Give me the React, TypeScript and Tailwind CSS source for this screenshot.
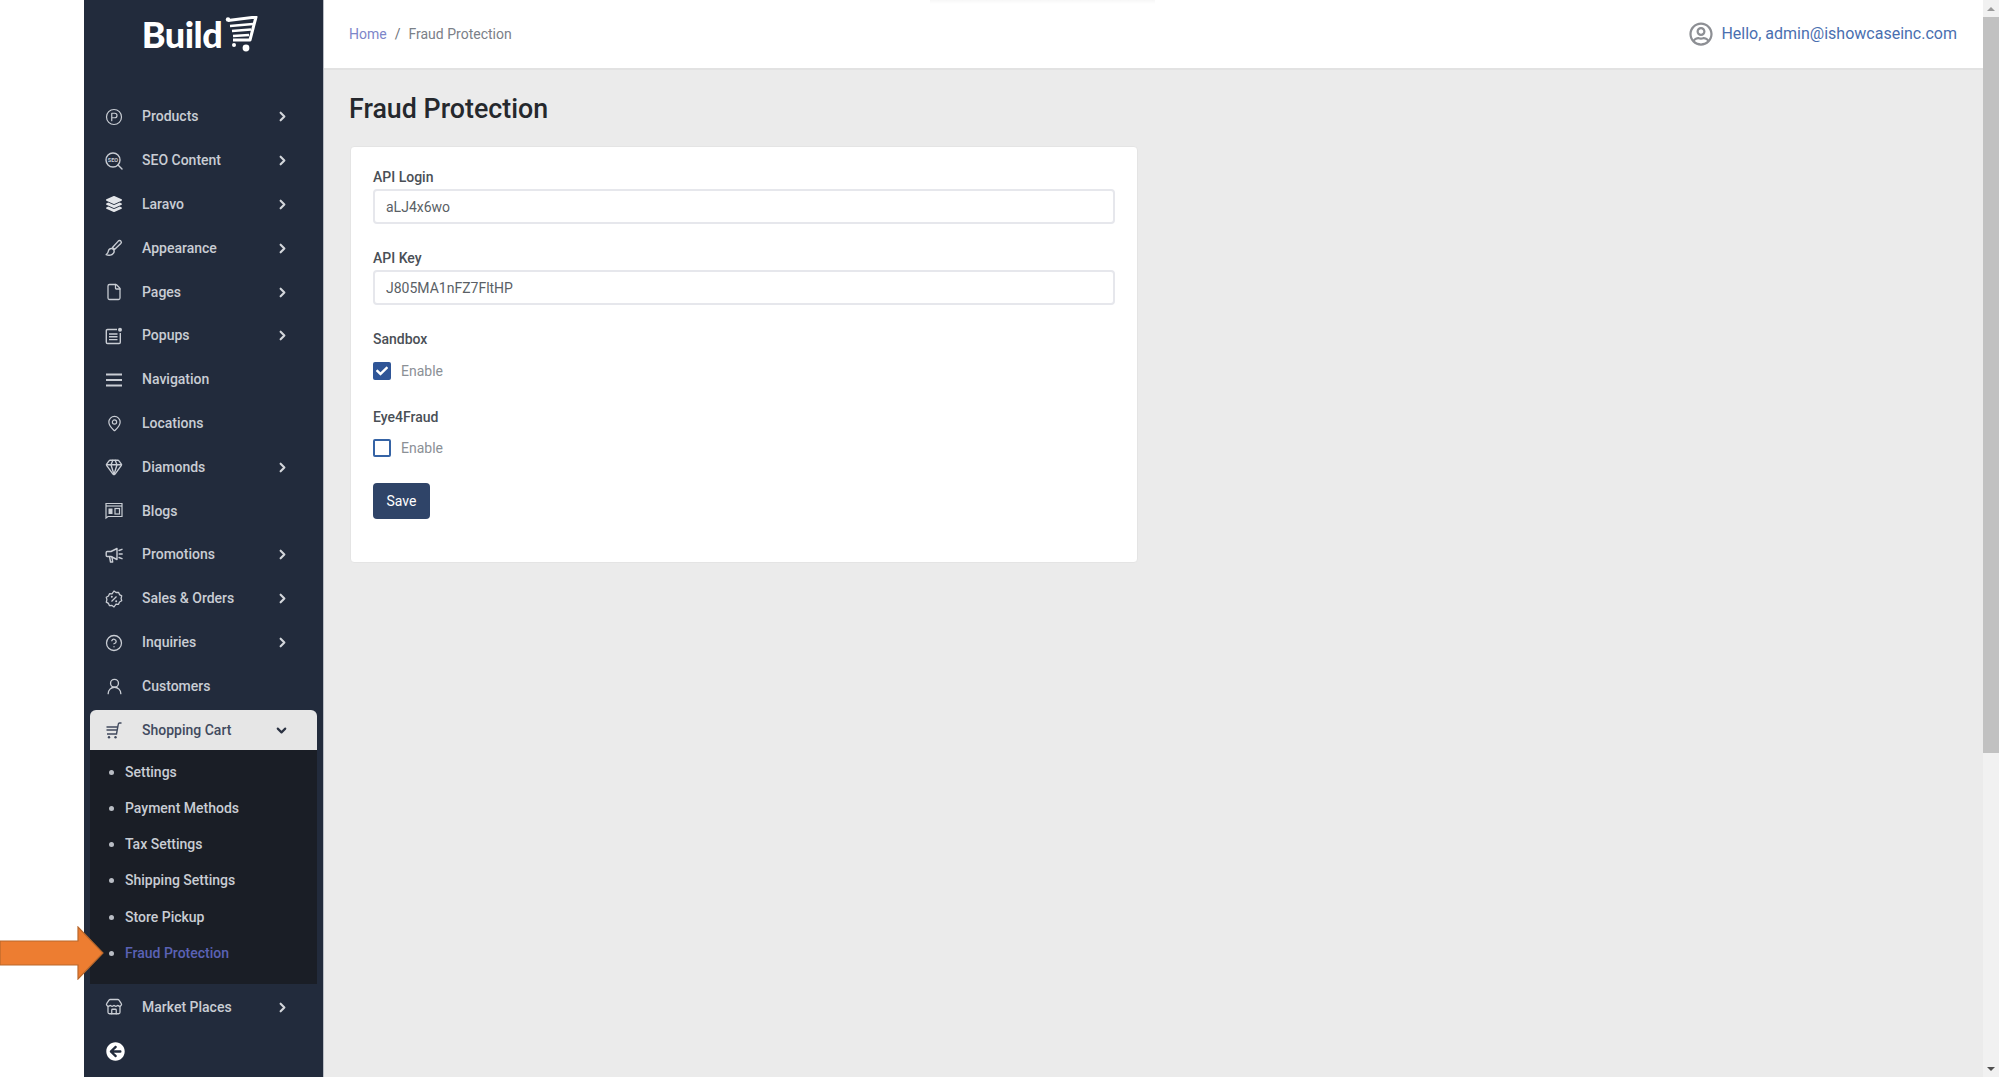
import React from 'react';
import {
  ChevronDown,
  ChevronRight,
  CircleHelp,
  CircleParking,
  File,
  Gem,
  MapPin,
  Store,
  UserRound,
} from 'lucide-react';
import { FaArrowCircleLeft, FaCheck, FaLayerGroup, FaRegUserCircle } from 'react-icons/fa';

const font = { fontFamily: 'Roboto, sans-serif' };

const SeoIcon = () => (
  <svg width="18" height="18" viewBox="0 0 18 18" fill="none" stroke="currentColor" strokeWidth="1.4">
    <circle cx="8" cy="8" r="7" />
    <path d="M13 13l4 4" strokeLinecap="round" />
    <text x="8" y="10" textAnchor="middle" fontSize="5.5" fontWeight="700" fill="currentColor" stroke="none">
      SEO
    </text>
  </svg>
);

const BrushIcon = () => (
  <svg width="18" height="18" viewBox="0 0 18 18" fill="none" stroke="currentColor" strokeWidth="1.4" strokeLinejoin="round">
    <path d="M7.5 8.5l5.8-6.4c.8-.8 2-.7 2.6 0 .6.7.6 1.7-.1 2.4l-6.3 5.9z" />
    <path d="M7 9.5c-2-.3-3.5 1-3.7 2.8-.1 1.2-.6 2.4-2.1 3.3 2.6 1.2 6 .7 7.3-1.4.8-1.3.7-3-.2-3.9z" />
  </svg>
);

const PopupIcon = () => (
  <svg width="18" height="18" viewBox="0 0 18 18" fill="none" stroke="currentColor" strokeWidth="1.4">
    <path d="M12 2.5H2.5a1.2 1.2 0 0 0-1.2 1.2v11.6c0 .7.5 1.2 1.2 1.2h11.6c.7 0 1.2-.5 1.2-1.2V6" />
    <path d="M4 7h8.5M4 9.8h8.5M4 12.6h8.5" />
    <circle cx="15" cy="2.8" r="2" fill="currentColor" stroke="none" />
  </svg>
);

const BlogIcon = () => (
  <svg width="18" height="18" viewBox="0 0 18 18" fill="none" stroke="currentColor" strokeWidth="1.2">
    <path d="M1 1.5h16v13H3l-2 1.5z" />
    <path d="M1 4h16" />
    <rect x="3.5" y="6.5" width="4" height="5.5" fill="currentColor" stroke="none" />
    <rect x="10" y="6.5" width="4.5" height="5.5" />
  </svg>
);

const MenuIcon = () => (
  <svg width="18" height="18" viewBox="0 0 18 18" stroke="currentColor" strokeWidth="1.8">
    <path d="M1 3.5h16M1 9h16M1 14.5h16" />
  </svg>
);

const PromoIcon = () => (
  <svg width="18" height="18" viewBox="0 0 18 18" fill="none" stroke="currentColor" strokeWidth="1.4" strokeLinejoin="round">
    <path d="M12 2.5L6 5.5H2.2a1 1 0 0 0-1 1v3a1 1 0 0 0 1 1H6l6 3z" />
    <path d="M4.5 10.5l1 5.5h2.2l-.8-5.5" />
    <path d="M14 4.5l3-1.2M14.2 8h3M14 11.5l3 1.2" strokeLinecap="round" />
  </svg>
);

const SalesIcon = () => (
  <svg width="18" height="18" viewBox="0 0 18 18" fill="none" stroke="currentColor" strokeWidth="1.3" strokeLinejoin="round">
    <path d="M9 1l2 1.5 2.5-.2 1 2.3 2.2 1.3-.6 2.4.6 2.4-2.2 1.3-1 2.3-2.5-.2L9 17l-2-1.5-2.5.2-1-2.3-2.2-1.3.6-2.4-.6-2.4 2.2-1.3 1-2.3 2.5.2z" />
    <path d="M11.5 6.5l-5 5" />
    <circle cx="6.8" cy="6.8" r="1" fill="currentColor" stroke="none" />
    <circle cx="11.2" cy="11.2" r="1" fill="currentColor" stroke="none" />
  </svg>
);

const CartIcon = () => (
  <svg width="16" height="17" viewBox="0 0 16 17" fill="none" stroke="currentColor" strokeWidth="1.4">
    <path d="M0.5 5h11M0.5 8h10.5M1 12h9.5l1.8-9.8c.1-.7.5-1.2 1.2-1.2H15.5" />
    <circle cx="3" cy="15.3" r="1.2" fill="currentColor" stroke="none" />
    <circle cx="9.5" cy="15.3" r="1.2" fill="currentColor" stroke="none" />
  </svg>
);

const LogoCart = () => (
  <svg width="33" height="36" viewBox="0 0 33 36" fill="none" className="ml-[3px] mt-[2px]">
    <path d="M3 4.5L31 1l-6 23H8" stroke="#fff" strokeWidth="3" strokeLinejoin="round" />
    <path d="M5 10l23-2M7 15l19-1.5M8 20l16-1" stroke="#fff" strokeWidth="2.6" />
    <circle cx="3" cy="3.5" r="2.2" fill="#fff" />
    <circle cx="9" cy="29" r="2" fill="#fff" />
    <circle cx="21" cy="32" r="3.4" fill="#fff" />
  </svg>
);

const items: { label: string; icon: React.ReactNode; arrow: boolean }[] = [
  { label: 'Products', icon: <CircleParking size={18} strokeWidth={1.6} />, arrow: true },
  { label: 'SEO Content', icon: <SeoIcon />, arrow: true },
  { label: 'Laravo', icon: <FaLayerGroup size={16} className="text-[#e4e6ea]" />, arrow: true },
  { label: 'Appearance', icon: <BrushIcon />, arrow: true },
  { label: 'Pages', icon: <File size={18} strokeWidth={1.7} />, arrow: true },
  { label: 'Popups', icon: <PopupIcon />, arrow: true },
  { label: 'Navigation', icon: <MenuIcon />, arrow: false },
  { label: 'Locations', icon: <MapPin size={17} strokeWidth={1.7} />, arrow: false },
  { label: 'Diamonds', icon: <Gem size={18} strokeWidth={1.8} />, arrow: true },
  { label: 'Blogs', icon: <BlogIcon />, arrow: false },
  { label: 'Promotions', icon: <PromoIcon />, arrow: true },
  { label: 'Sales & Orders', icon: <SalesIcon />, arrow: true },
  { label: 'Inquiries', icon: <CircleHelp size={18} strokeWidth={1.7} />, arrow: true },
  { label: 'Customers', icon: <UserRound size={19} strokeWidth={1.7} />, arrow: false },
];

const subItems = ['Settings', 'Payment Methods', 'Tax Settings', 'Shipping Settings', 'Store Pickup', 'Fraud Protection'];

const NavRow = ({ label, icon, arrow }: { label: string; icon: React.ReactNode; arrow: boolean }) => (
  <div className="h-[43.83px] flex items-center text-[#c9cdd4] text-[14px] font-medium">
    <div className="w-[58px] pl-[20px] flex justify-start shrink-0">
      <div className="w-5 flex justify-center">{icon}</div>
    </div>
    <span className="flex-1">{label}</span>
    {arrow && <ChevronRight size={15} strokeWidth={3.4} className="mr-[33px] text-[#d3d6db]" />}
  </div>
);

const Field = ({ label, value }: { label: string; value: string }) => (
  <div className="mb-[24px]">
    <div className="h-5 leading-5 text-[14px] font-medium text-[#4a4f56] mb-[2px]">{label}</div>
    <input
      defaultValue={value}
      className="block w-full h-[35px] px-[11px] bg-white border-2 border-[#e6e7ec] rounded-[4px] text-[14px] text-[#5a5f66] outline-none"
      style={font}
    />
  </div>
);

const Check = ({ on }: { on: boolean }) => (
  <div className="flex items-center h-[19px]">
    <div
      className={
        on
          ? 'w-[18px] h-[18px] rounded-[2px] bg-[#2f5597] flex items-center justify-center'
          : 'w-[18px] h-[18px] rounded-[2px] bg-white border-2 border-[#3563a5]'
      }
    >
      {on && <FaCheck size={12} className="text-white" />}
    </div>
    <span className="ml-[10px] mt-[2px] text-[14px] text-[#8b9096]">Enable</span>
  </div>
);

export default function App() {
  return (
    <div className="relative flex h-screen w-full overflow-hidden bg-white" style={font}>
      <div className="w-[84px] shrink-0 bg-white" />

      <aside className="w-[240px] shrink-0 bg-[#222b3c] border-r border-[#b9bdc4]">
        <div className="h-[94.8px] flex justify-center pt-[14px] pr-[7px]">
          <div className="flex items-start h-[40px]">
            <span className="text-[#fff] text-[36px] leading-[40px] font-black tracking-[-0.5px]" style={{ fontFamily: 'Lato, sans-serif' }}>
              Build
            </span>
            <LogoCart />
          </div>
        </div>

        {items.map((item) => (
          <NavRow key={item.label} {...item} />
        ))}

        <div className="mt-[1.8px] ml-[6px] mr-[6px]">
          <div className="h-[40px] flex items-center bg-[#e6e6e6] rounded-t-[6px] text-[#414a5e] text-[14px] font-medium">
            <div className="w-[52px] pl-[14px] shrink-0">
              <div className="w-5 flex justify-center">
                <CartIcon />
              </div>
            </div>
            <span className="flex-1">Shopping Cart</span>
            <ChevronDown size={15} strokeWidth={3.4} className="mr-[28px] text-[#2b3242]" />
          </div>
          <div className="bg-[#1a1e26] pt-[4px] pb-[13px]">
            {subItems.map((s) => (
              <div key={s} className="h-[36.2px] flex items-center pl-[19px] text-[14px] font-medium">
                <span className="w-[5px] h-[5px] rounded-full bg-[#b9bdc4] mr-[11px]" />
                <span className={s === 'Fraud Protection' ? 'text-[#5a62b5]' : 'text-[#c9cdd4]'}>{s}</span>
              </div>
            ))}
          </div>
        </div>

        <div className="mt-[1px]">
          <NavRow label="Market Places" icon={<Store size={18} strokeWidth={1.7} />} arrow />
        </div>
        <div className="h-[44px] flex items-center pl-[22px]">
          <FaArrowCircleLeft size={19} className="text-white" />
        </div>
      </aside>

      <main className="flex-1 min-w-0 bg-[#ebebeb]">
        <header className="h-[70px] bg-white border-b-2 border-[#e2e2e2] flex items-center justify-between pl-[25px] pr-[26px]">
          <div className="flex items-center text-[14px] text-[#7b8088]">
            <span className="text-[#7d86c9]">Home</span>
            <span className="mx-[8px] text-[#6d7278]">/</span>
            <span>Fraud Protection</span>
          </div>
          <div className="flex items-center">
            <FaRegUserCircle size={24} className="text-[#8d8f94] mr-[8px]" />
            <span className="text-[16px] text-[#4a6fb0]">Hello, admin@ishowcaseinc.com</span>
          </div>
        </header>

        <div className="pl-[26px] pt-[20px]">
          <h1 className="h-[38px] leading-[38px] -ml-[1px] text-[26.8px] font-medium text-[#25282d]">Fraud Protection</h1>
          <div className="mt-[18px] w-[788px] h-[417px] bg-white rounded-[4px] border border-[#e4e4e4] px-[22px] pt-[20px]">
            <Field label="API Login" value="aLJ4x6wo" />
            <Field label="API Key" value="J805MA1nFZ7FltHP" />
            <div className="h-5 leading-5 text-[14px] font-medium text-[#4a4f56] mb-[12px]">Sandbox</div>
            <Check on />
            <div className="h-5 leading-5 text-[14px] font-medium text-[#4a4f56] mt-[27px] mb-[11px]">Eye4Fraud</div>
            <Check on={false} />
            <button className="mt-[26px] block w-[57px] h-[36px] bg-[#2f4468] text-white text-[14px] rounded-[4px]">
              Save
            </button>
          </div>
        </div>
      </main>

      <div className="w-[16px] shrink-0 bg-[#f1f1f1] flex flex-col items-center">
        <div className="h-[17px] flex items-center justify-center">
          <div className="w-0 h-0 border-x-[4px] border-x-transparent border-b-[4px] border-b-[#9a9a9a]" />
        </div>
        <div className="w-full h-[736px] bg-[#c1c1c1]" />
        <div className="flex-1" />
        <div className="h-[17px] flex items-center justify-center">
          <div className="w-0 h-0 border-x-[4px] border-x-transparent border-t-[4px] border-t-[#505050]" />
        </div>
      </div>

      {/* faint shadow at the top edge */}
      <div className="absolute left-[930px] top-0 w-[225px] h-[4px] bg-gradient-to-b from-[#f7f7f7] to-white" />

      <svg className="absolute left-0 top-[926px]" width="105" height="54" viewBox="0 0 105 54">
        <path d="M0 15h78V1l25 26-25 26V39H0z" fill="#ed7d31" stroke="#b9682c" strokeWidth="1.2" />
      </svg>
    </div>
  );
}
